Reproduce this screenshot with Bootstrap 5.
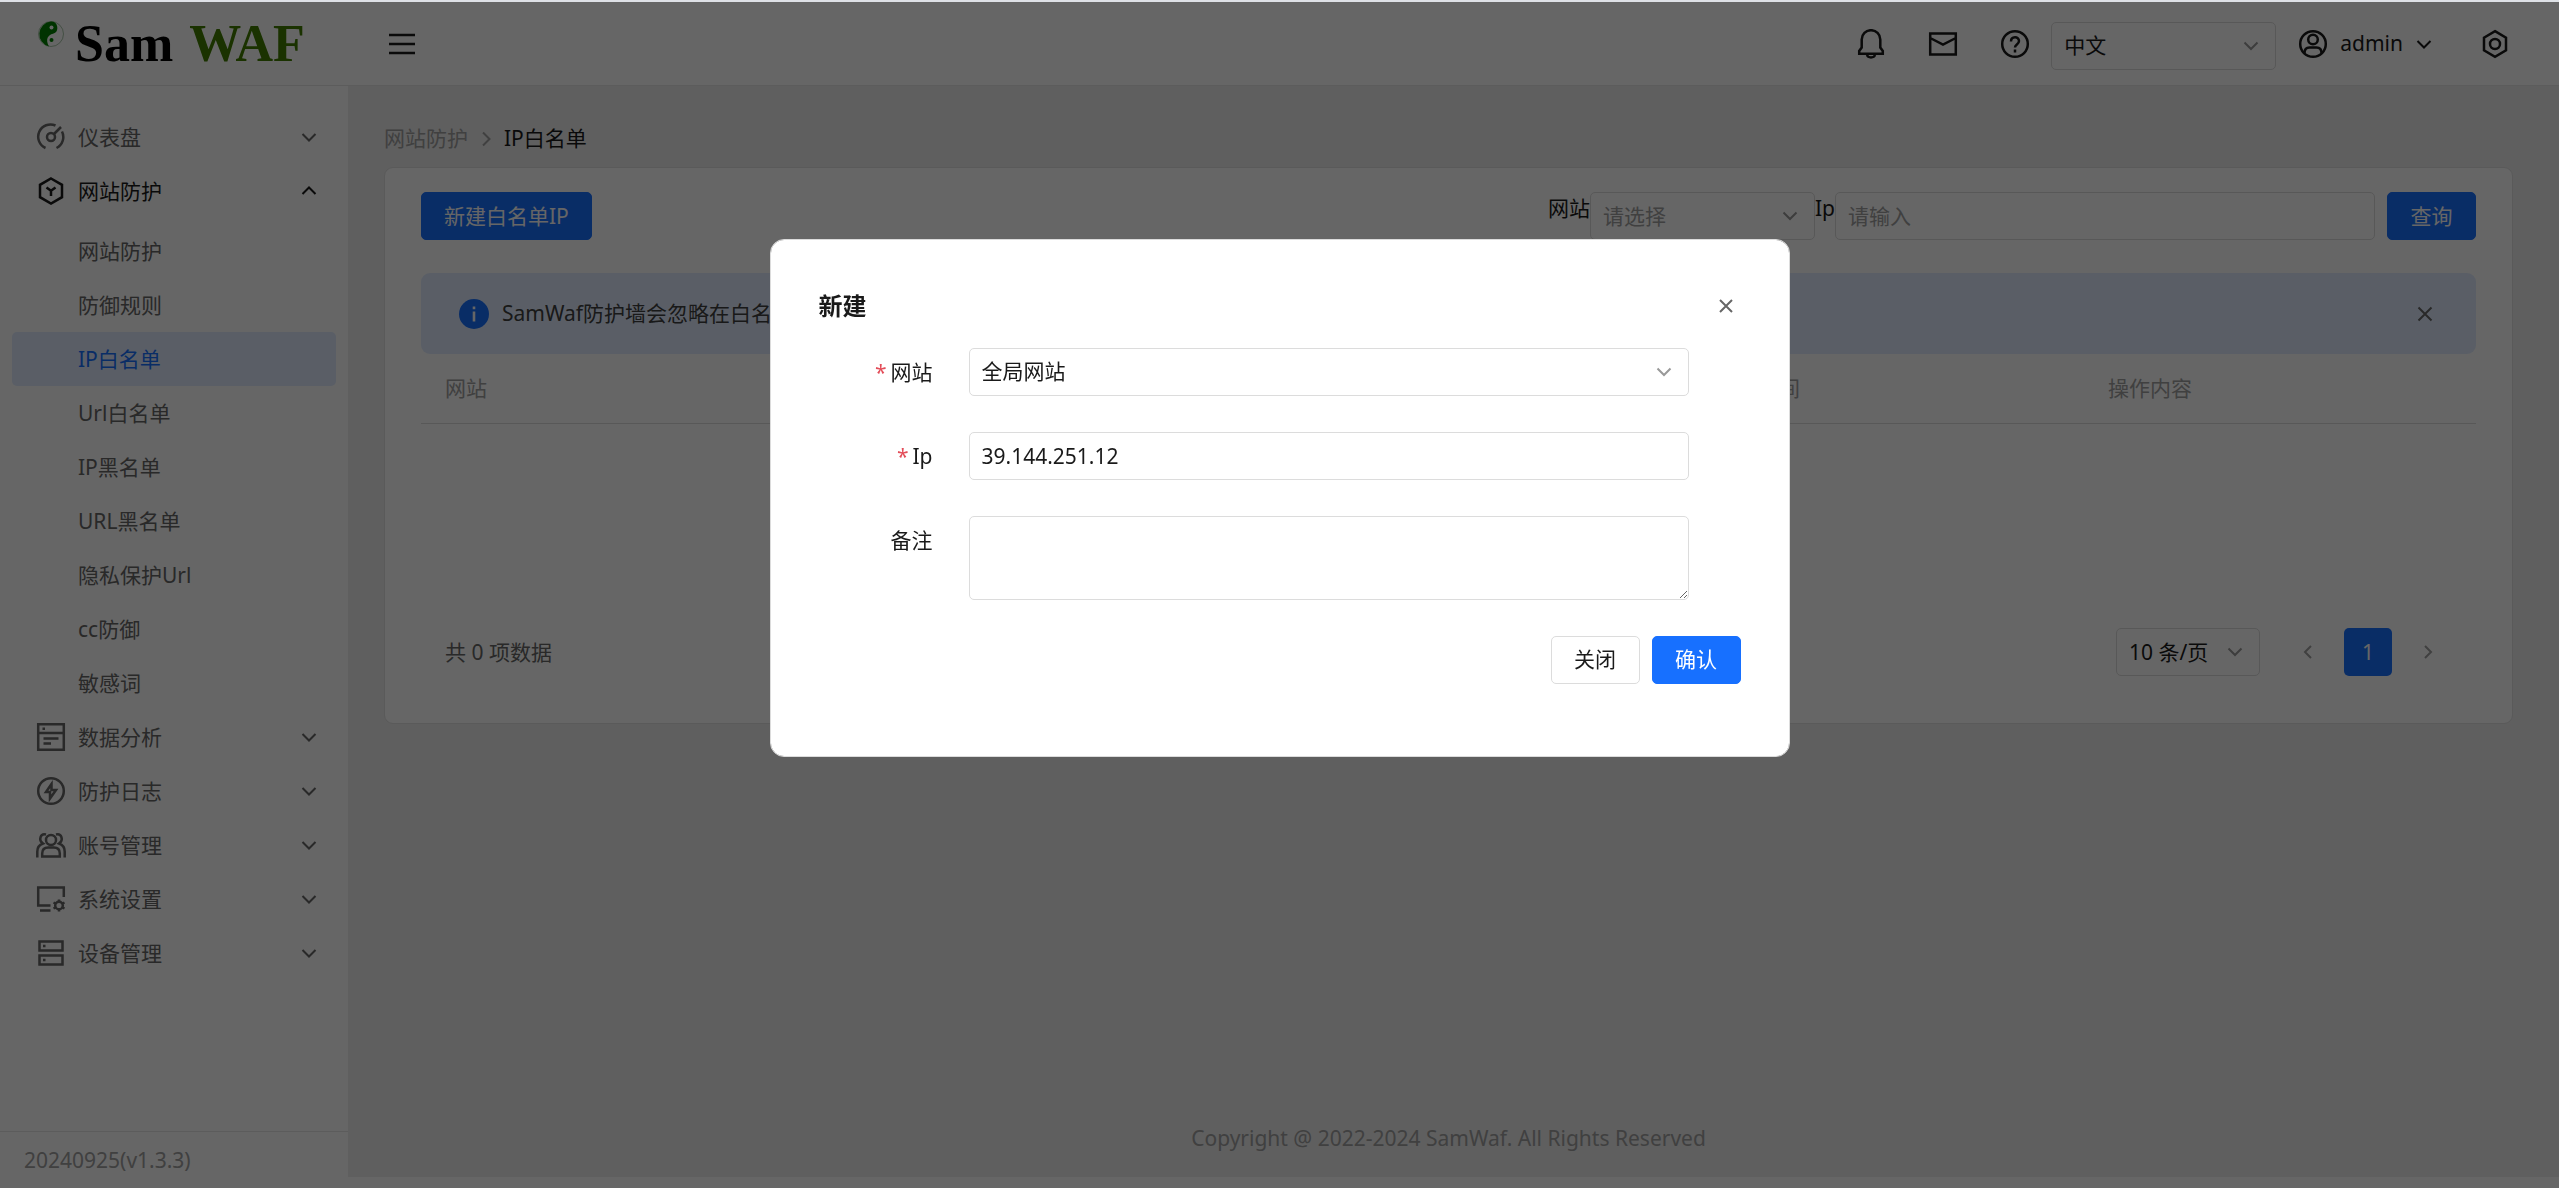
<!DOCTYPE html>
<html lang="zh-CN">
<head>
<meta charset="utf-8">
<meta name="viewport" content="width=device-width, initial-scale=1">
<title>SamWAF - IP白名单</title>
<link href="https://cdn.jsdelivr.net/npm/bootstrap@5.3.0/dist/css/bootstrap.min.css" rel="stylesheet">
<style>
:root{--brand:#1770ff;--brand-soft:#e0ecff;--ink:#1a1a1a;--ink-2:#666;--ink-3:#a0a0a0;--line:#dcdcdc}
body{font-family:"Noto Sans","Noto Sans CJK SC",sans-serif;font-size:21px;line-height:33px;color:var(--ink);background:#fff;min-height:100vh}
.ico{width:30px;height:30px;flex:none;fill:none;stroke:currentColor;stroke-width:2.5}
.ico-sm{width:18px;height:18px;flex:none;fill:none;stroke:currentColor;stroke-width:2}
.browser-edge{height:2px;background:#dee1e6;position:relative;z-index:1100}
.topbar{height:84px;border-bottom:1px solid #e7e7e7;padding-right:40px}
.brand{width:348px;padding-left:37px;font:bold 52px/48px "Liberation Serif",serif;color:#000;text-decoration:none}
.brand svg{width:28px;height:28px;margin-top:1px}
.brand .sam{margin-left:10px}
.brand .waf{margin-left:16px;color:#427d00}
.tool{width:48px;height:48px;border:0;padding:0;background:none;color:var(--ink);display:flex;align-items:center;justify-content:center}
.menu-toggle{margin-left:30px}
.w-lang{width:225px;margin-left:12px}
.account{width:auto;gap:12px;margin-left:22px}
.settings{margin-left:38px}
.form-control,.form-select{height:48px;font-size:21px;line-height:33px;padding:6px 12px;border:1px solid var(--line);border-radius:5px;color:var(--ink)}
.form-control::placeholder{color:var(--ink-3)}
.form-select{background-image:url("data:image/svg+xml,%3Csvg xmlns='http://www.w3.org/2000/svg' viewBox='0 0 18 18'%3E%3Cpath d='M2.500 5.500 9 12l6.500-6.500' fill='none' stroke='%23999' stroke-width='2'/%3E%3C/svg%3E");background-size:18px;background-position:right 15px center;padding-right:40px}
.w-pick{width:225px}
.is-hint{color:var(--ink-3)}
.q-ip{width:540px;margin-right:12px}
.btn{height:48px;min-width:89px;font-size:21px;line-height:33px;padding:6px 22px;border-radius:5px}
.btn-primary{--bs-btn-bg:var(--brand);--bs-btn-border-color:var(--brand)}
.btn-plain{border:1px solid var(--line);background:#fff;color:var(--ink)}
.side{width:348px;flex:none;background:#fff}
.side-menu{padding:24px 12px}
.side-menu a{height:54px;padding:0 18px 0 24px;gap:12px;color:var(--ink-2);border-radius:5px;display:flex;align-items:center;text-decoration:none}
.side-menu a.open{color:var(--ink)}
.side-menu .sub{padding-top:6px}
.side-menu .sub a{padding-left:66px}
.side-menu .sub a.active{background:var(--brand-soft);color:var(--brand)}
.side-foot{height:57px;border-top:1px solid #e7e7e7;padding:12px 24px;color:var(--ink-3)}
.stage{background:#eee;margin-bottom:11px;padding:36px 46px 22px 36px}
.crumbs{gap:9px;height:33px;margin:0 0 12px}
.crumbs a,.crumbs .ico-sm{color:var(--ink-3);text-decoration:none}
.panel{background:#fff;border:1px solid #e0e0e0;border-radius:9px;padding:24px 36px 47px}
.notice{height:81px;background:var(--brand-soft);border-radius:9px;margin-top:33px;padding:0 42px 0 38px;color:#404040}
.notice .ico{stroke:none;margin-right:13px}
.list{margin:0;--bs-table-bg:transparent;table-layout:fixed}
.list .col-wide{width:392px}
.list th{font-weight:400;color:var(--ink-3);padding:18px 24px;border-bottom:1px solid var(--line)}
.pager{margin-top:204px;padding:0 24px}
.total{color:var(--ink-2)}
.pages,.foot-actions{gap:12px}
.page-no{width:48px;height:48px;border:0;border-radius:5px;background:none;padding:0;color:var(--ink-3);display:flex;align-items:center;justify-content:center}
.page-no.on{background:var(--brand);color:#fff}
.w-size{width:144px;padding-right:36px}
.copy{color:var(--ink-3)}
.modal-backdrop{--bs-backdrop-opacity:.6}
.modal-dialog{max-width:1020px;margin:20vh auto 0;padding-top:1px}
.modal-content{border:1px solid var(--line);border-radius:14px;padding:48px 48px 72px}
.modal-title{font-size:24px;line-height:36px;font-weight:700}
.dialog-close{border:0;background:none;padding:0;width:30px;height:30px;color:var(--ink-2);display:flex;align-items:center;justify-content:center}
.field{margin-bottom:36px}
.field label{width:150px;flex:none;text-align:right;padding:8px 36px 0 0}
.field .req::before{content:"*";color:#e34d59;margin-right:4px}
.field .form-control,.field .form-select{max-width:720px}
.field textarea.form-control{height:84px;resize:vertical}
</style>
<script src="https://cdn.jsdelivr.net/npm/bootstrap@5.3.0/dist/js/bootstrap.bundle.min.js"></script>
</head>
<body class="d-flex flex-column">
<div class="browser-edge"></div>
<header class="topbar d-flex align-items-center">
  <a href="#" class="brand d-flex align-items-start">
    <svg viewBox="0 0 28 28"><circle cx="14" cy="13" r="12.500" fill="none" stroke="#6fa06f" stroke-width=".6"/><path d="M14 .5a6.250 6.250 0 0 1 2 12.200C11 14 8 18 12 25.500A12.700 12.700 0 0 1 14 .5z" fill="#008000"/><circle cx="14.500" cy="6.500" r="2" fill="#fff"/><circle cx="14.500" cy="19" r="2" fill="#008000"/></svg>
    <span class="sam">Sam</span><span class="waf">WAF</span>
  </a>
  <button class="tool menu-toggle" aria-label="收起菜单"><svg class="ico" viewBox="0 0 30 30"><path d="M2 6h26M2 15h26M2 24h26"/></svg></button>
  <div class="d-flex align-items-center ms-auto gap-4">
    <button class="tool" aria-label="通知"><svg class="ico" viewBox="0 0 30 30"><path d="M5.700 10.500a9.300 9.300 0 0 1 18.600 0v8l2.500 3.500v2.800H3.200V22l2.500-3.500zM11 26c1 3.200 7 3.200 8 0"/></svg></button>
    <button class="tool" aria-label="消息"><svg class="ico" viewBox="0 0 30 30"><path d="M2.200 4.500h25.600v21H2.200zM2.200 9 15 15.500 27.800 9"/></svg></button>
    <button class="tool" aria-label="帮助"><svg class="ico" viewBox="0 0 30 30"><circle cx="15" cy="15" r="12.800"/><path d="M11 12.500c0-5.500 8-5.500 8-.5 0 3.500-4 3.500-4 6.500M15 20.500v3"/></svg></button>
  </div>
  <select class="form-select w-lang mt-1" aria-label="语言"><option>中文</option></select>
  <button class="tool account"><svg class="ico" viewBox="0 0 30 30"><circle cx="15" cy="15" r="12.800"/><circle cx="15" cy="10.500" r="4.800"/><path d="M6.500 24c0-4 2-5.500 5-5.500h7c3 0 5 1.500 5 5.500"/></svg><span>admin</span><svg class="ico-sm" viewBox="0 0 18 18"><path d="M2.500 6 9 12.500 15.500 6"/></svg></button>
  <button class="tool settings" aria-label="设置"><svg class="ico" viewBox="0 0 30 30"><path d="M15 2.200 26 8.600v12.800L15 27.800 4 21.400V8.600z"/><circle cx="15" cy="15" r="5"/></svg></button>
</header>

<div class="d-flex flex-fill">
  <aside class="side d-flex flex-column">
    <nav class="side-menu flex-fill">
      <a href="#"><svg class="ico" viewBox="0 0 30 30"><path d="M9.500 26A12.300 12.300 0 0 1 19.500 3.500M26 9.500A12.300 12.300 0 0 1 20.500 26M18 12l7-7"/><circle cx="15" cy="15" r="4"/></svg><span>仪表盘</span><svg class="ico-sm ms-auto" viewBox="0 0 18 18"><path d="M2.500 6 9 12.500 15.500 6"/></svg></a>
      <a href="#" class="open"><svg class="ico" viewBox="0 0 30 30"><path d="M15 2.500 26 8.800v12.400L15 27.500 4 21.200V8.800zM10.500 11.500 15 14.800l4.500-3.300M15 14.800V20"/></svg><span>网站防护</span><svg class="ico-sm ms-auto" viewBox="0 0 18 18"><path d="M2.500 12 9 5.500 15.500 12"/></svg></a>
      <div class="sub">
        <a href="#">网站防护</a>
        <a href="#">防御规则</a>
        <a href="#" class="active">IP白名单</a>
        <a href="#">Url白名单</a>
        <a href="#">IP黑名单</a>
        <a href="#">URL黑名单</a>
        <a href="#">隐私保护Url</a>
        <a href="#">cc防御</a>
        <a href="#">敏感词</a>
      </div>
      <a href="#"><svg class="ico" viewBox="0 0 30 30"><path d="M2.200 2.200h25.600v25.600H2.200zM2.200 11h25.600M7.500 16.500h15M7.500 21.500h7.500M6.500 6.700H9"/></svg><span>数据分析</span><svg class="ico-sm ms-auto" viewBox="0 0 18 18"><path d="M2.500 6 9 12.500 15.500 6"/></svg></a>
      <a href="#"><svg class="ico" viewBox="0 0 30 30"><circle cx="15" cy="15" r="12.800"/><path d="M15.500 8 10 16h4v6.500l6-8.500h-4.500z"/></svg><span>防护日志</span><svg class="ico-sm ms-auto" viewBox="0 0 18 18"><path d="M2.500 6 9 12.500 15.500 6"/></svg></a>
      <a href="#"><svg class="ico" viewBox="0 0 30 30"><circle cx="15" cy="10" r="5"/><path d="M6.200 26.500v-3c0-4 2-6 6-6h5.600c4 0 6 2 6 6v3zM10 4.500C4.500 3 2 10 7 13.500c-4 1.500-5.700 4-5.700 8v6M20 4.500c5.500-1.500 8 5.500 3 9 4 1.500 5.700 4 5.700 8v6"/></svg><span>账号管理</span><svg class="ico-sm ms-auto" viewBox="0 0 18 18"><path d="M2.500 6 9 12.500 15.500 6"/></svg></a>
      <a href="#"><svg class="ico" viewBox="0 0 30 30"><path d="M14.500 21.500H2.200V3.500h25.600v9.500M4 26.500h10.500"/><circle cx="23" cy="21.500" r="3.800"/><path d="M23 15.500v2M23 25.500v2M17.500 18.500l2 1M26.500 23.500l2 1M17.500 24.500l2-1M26.500 19.500l2-1"/></svg><span>系统设置</span><svg class="ico-sm ms-auto" viewBox="0 0 18 18"><path d="M2.500 6 9 12.500 15.500 6"/></svg></a>
      <a href="#"><svg class="ico" viewBox="0 0 30 30"><path d="M3.500 3.500h23v9h-23zM3.500 17.500h23v9h-23zM7 8h2.500M7 22h2.500"/></svg><span>设备管理</span><svg class="ico-sm ms-auto" viewBox="0 0 18 18"><path d="M2.500 6 9 12.500 15.500 6"/></svg></a>
    </nav>
    <div class="side-foot">20240925(v1.3.3)</div>
  </aside>

  <main class="stage d-flex flex-column flex-fill">
    <nav aria-label="breadcrumb">
      <div class="crumbs d-flex align-items-center">
        <a href="#">网站防护</a>
        <svg class="ico-sm" viewBox="0 0 18 18"><path d="M6 2.500 12.500 9 6 15.500"/></svg>
        <span>IP白名单</span>
      </div>
    </nav>
    <section class="panel">
      <div class="d-flex">
        <button class="btn btn-primary">新建白名单IP</button>
        <form class="d-flex ms-auto">
          <label for="q-site">网站</label>
          <select id="q-site" class="form-select w-pick is-hint"><option>请选择</option></select>
          <label for="q-ip">Ip</label>
          <input id="q-ip" class="form-control q-ip" placeholder="请输入">
          <button type="button" class="btn btn-primary flex-shrink-0">查询</button>
        </form>
      </div>
      <div class="notice d-flex align-items-center">
        <svg class="ico" viewBox="0 0 30 30"><circle cx="15" cy="15" r="15" fill="#1770ff"/><path d="M13.700 7.500h2.600v2.800h-2.600zM13.700 12.500h2.600v10h-2.600z" fill="#fff"/></svg>
        <span>SamWaf防护墙会忽略在白名单</span>
        <button class="dialog-close ms-auto w-auto" aria-label="关闭提示"><svg class="ico-sm" viewBox="0 0 18 18"><path d="M2.500 2.500l13 13M15.500 2.500l-13 13"/></svg></button>
      </div>
      <table class="table list">
        <colgroup><col><col><col><col class="col-wide"><col class="col-wide"></colgroup>
        <thead><tr><th>网站</th><th></th><th></th><th>添加时间</th><th>操作内容</th></tr></thead>
      </table>
      <div class="pager d-flex align-items-center">
        <span class="total me-auto">共 0 项数据</span>
        <select class="form-select w-size" aria-label="每页条数"><option>10 条/页</option></select>
        <div class="pages d-flex ms-4">
          <button class="page-no" aria-label="上一页"><svg class="ico-sm" viewBox="0 0 18 18"><path d="M12 3 6 9l6 6"/></svg></button>
          <button class="page-no on">1</button>
          <button class="page-no" aria-label="下一页"><svg class="ico-sm" viewBox="0 0 18 18"><path d="M6 3l6 6-6 6"/></svg></button>
        </div>
      </div>
    </section>
    <footer class="copy mt-auto text-center">Copyright @ 2022-2024 SamWaf. All Rights Reserved</footer>
  </main>
</div>

<div class="modal-backdrop show"></div>
<div class="modal d-block" tabindex="-1" role="dialog" aria-labelledby="dlg-title">
  <div class="modal-dialog">
    <form class="modal-content">
      <div class="d-flex align-items-center justify-content-between mb-4">
        <h2 class="modal-title" id="dlg-title">新建</h2>
        <button type="button" class="dialog-close" aria-label="关闭"><svg class="ico-sm" viewBox="0 0 18 18"><path d="M3 3l12 12M15 3 3 15"/></svg></button>
      </div>
      <div class="field d-flex"><label class="req" for="f-site">网站</label><select id="f-site" class="form-select"><option>全局网站</option></select></div>
      <div class="field d-flex"><label class="req" for="f-ip">Ip</label><input id="f-ip" class="form-control" value="39.144.251.12"></div>
      <div class="field d-flex"><label for="f-note">备注</label><textarea id="f-note" class="form-control"></textarea></div>
      <div class="foot-actions d-flex justify-content-end">
        <button type="button" class="btn btn-plain">关闭</button>
        <button type="button" class="btn btn-primary">确认</button>
      </div>
    </form>
  </div>
</div>
</body>
</html>
